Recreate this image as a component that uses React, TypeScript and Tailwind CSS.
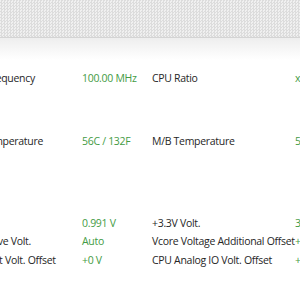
const rows = [
  { label: "BCLK Frequency", shift: "", value: "100.00 MHz", label2: "CPU Ratio", value2: "x40", h: "h-[63px]" },
  { label: "CPU Temperature", shift: "", value: "56C / 132F", label2: "M/B Temperature", value2: "50C / 122F", h: "h-[82px]" },
  { label: "Vcore", shift: "", value: "0.991 V", label2: "+3.3V Volt.", value2: "3.312 V", h: "h-[18px]" },
  { label: "CPU Drive Volt.", shift: "ml-[2px]", value: "Auto", label2: "Vcore Voltage Additional Offset", value2: "+0 V", h: "h-[19px]" },
  { label: "CPU Out Volt. Offset", shift: "ml-[3px]", value: "+0 V", label2: "CPU Analog IO Volt. Offset", value2: "+0 V", h: "h-[19px]" },
];

export default function App() {
  return (
    <div className="w-[300px] h-[300px] overflow-hidden bg-white font-['Open_Sans',sans-serif] text-[10.5px] tracking-[-0.3px]">
      {/* textured header strip */}
      <div className="h-[38px] bg-[#e9e9e9] bg-[repeating-conic-gradient(#dcdcdc_0_25%,#f0f0f0_0_50%)] bg-size-[3px_3px] border-b border-[#d4d4d4]" />
      <div className="h-[22px] bg-linear-to-b from-[#eeeeee] to-white" />

      <div className="pt-[11px] ml-[-40px]">
        {rows.map((r) => (
          <div key={r.label} className="flex items-start">
            <div className="w-[122px] shrink-0 text-[#262626] whitespace-nowrap overflow-hidden">
              <span className={`inline-block ${r.shift}`}>{r.label}</span>
            </div>
            <div className="w-[70px] shrink-0 text-[#449b44] whitespace-nowrap">{r.value}</div>
            <div className="w-[143px] shrink-0 text-[#262626] whitespace-nowrap">{r.label2}</div>
            <div className="shrink-0 text-[#449b44] whitespace-nowrap">{r.value2}</div>
            <div className={r.h} />
          </div>
        ))}
      </div>
    </div>
  );
}
